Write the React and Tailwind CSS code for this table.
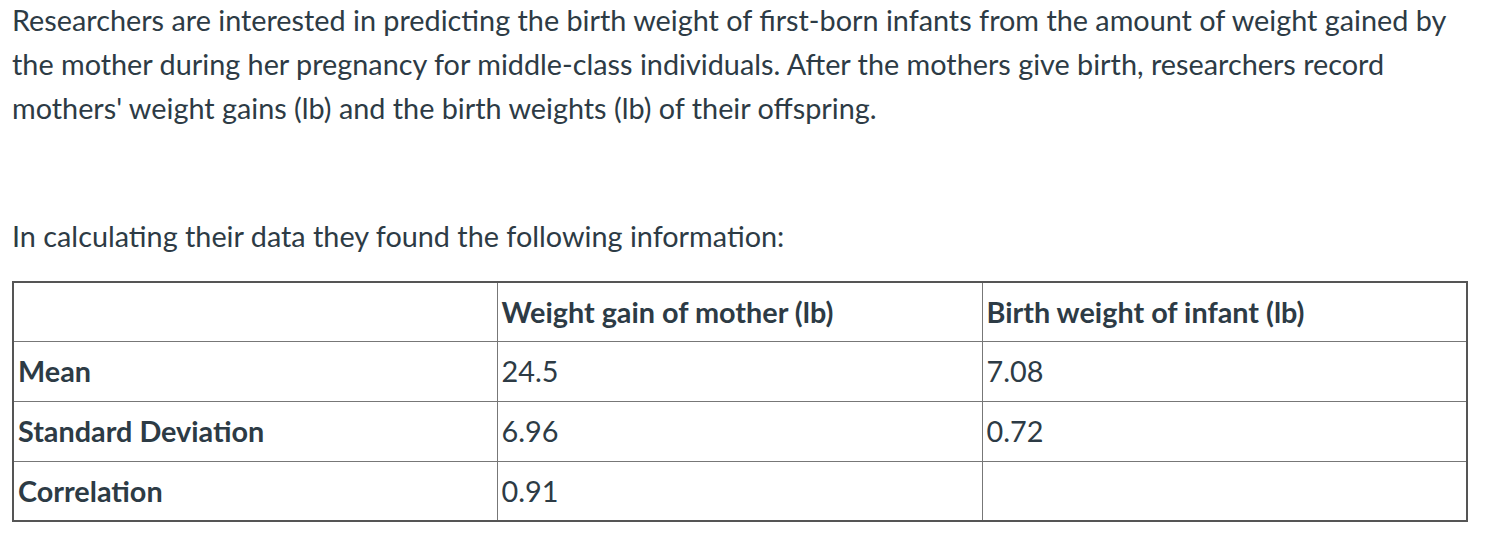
export default function App() {
  const rows = [
    { label: "Mean", a: "24.5", b: "7.08" },
    { label: "Standard Deviation", a: "6.96", b: "0.72" },
    { label: "Correlation", a: "0.91", b: "" },
  ];

  return (
    <div className="bg-white min-h-[540px] pl-3 font-['Lato',sans-serif] text-[28.8px] leading-[44px] text-[#2d3b45]">
      <div className="w-[1456px]">
        <p className="-mt-[2px]">
          Researchers are interested in predicting the birth weight of first-born infants from the amount of weight gained by
          the mother during her pregnancy for middle-class individuals. After the mothers give birth, researchers record
          mothers' weight gains (lb) and the birth weights (lb) of their offspring.
        </p>

        <p className="mt-[84px]">In calculating their data they found the following information:</p>

        <table className="mt-[23px] w-full border-collapse border-2 border-[#555]">
          <tbody>
            <tr className="h-[59px]">
              <td className="w-[484px] border border-[#777] px-1"></td>
              <td className="w-[485px] border border-[#777] px-1 font-bold">Weight gain of mother (lb)</td>
              <td className="border border-[#777] px-1 font-bold">Birth weight of infant (lb)</td>
            </tr>
            {rows.map((r) => (
              <tr key={r.label} className="h-[60px]">
                <td className="border border-[#777] px-1 font-bold">{r.label}</td>
                <td className="border border-[#777] px-1">{r.a}</td>
                <td className="border border-[#777] px-1">{r.b}</td>
              </tr>
            ))}
          </tbody>
        </table>
      </div>
    </div>
  );
}
